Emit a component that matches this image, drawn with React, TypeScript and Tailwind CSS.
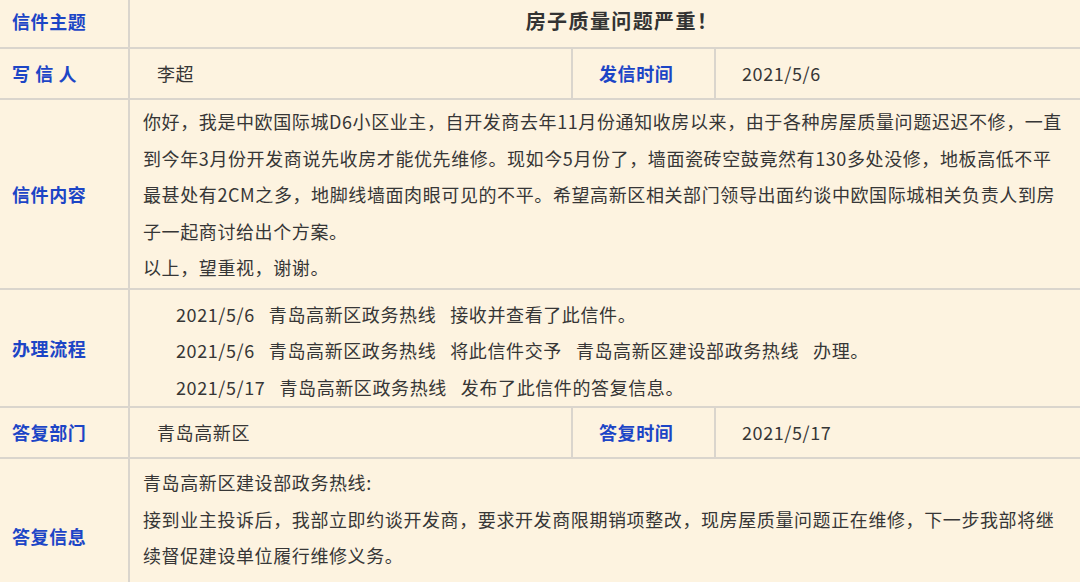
const font = "font-['Noto_Sans_CJK_SC','Noto_Sans',sans-serif]";

const Label = ({ children }: { children: React.ReactNode }) => (
  <div className="w-[130px] shrink-0 border-r-2 border-[#dad5cd] pl-3 flex items-center font-bold text-[#1c45c6]">
    {children}
  </div>
);

const contentLines = [
  "你好，我是中欧国际城D6小区业主，自开发商去年11月份通知收房以来，由于各种房屋质量问题迟迟不修，一直",
  "到今年3月份开发商说先收房才能优先维修。现如今5月份了，墙面瓷砖空鼓竟然有130多处没修，地板高低不平",
  "最甚处有2CM之多，地脚线墙面肉眼可见的不平。希望高新区相关部门领导出面约谈中欧国际城相关负责人到房",
  "子一起商讨给出个方案。",
  "以上，望重视，谢谢。",
];

const flow = [
  ["2021/5/6", "青岛高新区政务热线", "接收并查看了此信件。"],
  ["2021/5/6", "青岛高新区政务热线", "将此信件交予", "青岛高新区建设部政务热线", "办理。"],
  ["2021/5/17", "青岛高新区政务热线", "发布了此信件的答复信息。"],
];

const reply = [
  "青岛高新区建设部政务热线:",
  "接到业主投诉后，我部立即约谈开发商，要求开发商限期销项整改，现房屋质量问题正在维修，下一步我部将继",
  "续督促建设单位履行维修义务。",
];

export default function App() {
  return (
    <div
      className={`w-[1080px] h-[582px] overflow-hidden bg-[#fdf3e0] text-[18px] tracking-[0.6px] text-[#363636] ${font}`}
    >
      {/* 信件主题 */}
      <div className="flex h-[49px] border-b-2 border-[#dad5cd]">
        <Label>
          <span className="pb-[5px]">信件主题</span>
        </Label>
        <div className="flex-1 flex items-center justify-center pb-[5px] pl-[34px] text-[20px] font-bold tracking-[1.4px] text-[#333]">
          房子质量问题严重！
        </div>
      </div>

      {/* 写信人 / 发信时间 */}
      <div className="flex h-[51px] border-b-2 border-[#dad5cd]">
        <Label>
          <span className="whitespace-pre">写 信 人</span>
        </Label>
        <div className="w-[443px] shrink-0 border-r-2 border-[#dad5cd] pl-[27px] flex items-center">
          李超
        </div>
        <div className="w-[143px] shrink-0 border-r-2 border-[#dad5cd] pl-[26px] flex items-center font-bold text-[#1c45c6]">
          发信时间
        </div>
        <div className="flex-1 pl-[26px] flex items-center">2021/5/6</div>
      </div>

      {/* 信件内容 */}
      <div className="flex h-[190px] border-b-2 border-[#dad5cd]">
        <Label>信件内容</Label>
        <div className="flex-1 pl-[13px] pt-[3px] leading-[36.5px]">
          {contentLines.map((l) => (
            <div key={l} className="whitespace-nowrap">
              {l}
            </div>
          ))}
        </div>
      </div>

      {/* 办理流程 */}
      <div className="flex h-[118px] border-b-2 border-[#dad5cd]">
        <Label>办理流程</Label>
        <div className="flex-1 pl-[46px] pt-[6px] leading-[36.3px]">
          {flow.map((parts, i) => (
            <div key={i} className="flex gap-[14px] whitespace-nowrap">
              {parts.map((p, j) => (
                <span key={j}>{p}</span>
              ))}
            </div>
          ))}
        </div>
      </div>

      {/* 答复部门 / 答复时间 */}
      <div className="flex h-[51px] border-b-2 border-[#dad5cd]">
        <Label>答复部门</Label>
        <div className="w-[443px] shrink-0 border-r-2 border-[#dad5cd] pl-[27px] flex items-center">
          青岛高新区
        </div>
        <div className="w-[143px] shrink-0 border-r-2 border-[#dad5cd] pl-[26px] flex items-center font-bold text-[#1c45c6]">
          答复时间
        </div>
        <div className="flex-1 pl-[26px] flex items-center">2021/5/17</div>
      </div>

      {/* 答复信息 */}
      <div className="flex h-[155px]">
        <Label>答复信息</Label>
        <div className="flex-1 pl-[13px] pt-[5px] leading-[36.5px]">
          {reply.map((l) => (
            <div key={l} className="whitespace-nowrap">
              {l}
            </div>
          ))}
        </div>
      </div>
    </div>
  );
}
